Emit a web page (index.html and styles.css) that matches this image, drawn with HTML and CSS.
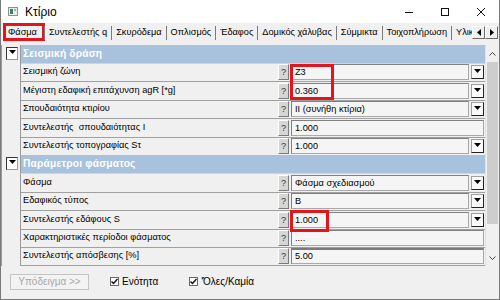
FILE: index.html
```html
<!DOCTYPE html>
<html lang="el">
<head>
    <meta charset="UTF-8">
    <title>Κτίριο</title>
    <link rel="stylesheet" href="styles.css">
</head>
<body>
    <div class="window">
        <div class="titlebar">
            <svg class="app-icon" viewBox="0 0 10 9">
                <rect x="0.5" y="0.5" width="9" height="8" fill="#e8ecea" stroke="#8a9490"/>
                <rect x="2" y="2" width="3" height="5" fill="#3f7f6f"/>
                <rect x="6" y="2" width="2" height="2" fill="#9fb3ad"/>
            </svg>
            <span class="title">Κτίριο</span>
            <div class="controls">
                <span class="ctl"><svg width="10" height="10" viewBox="0 0 10 10"><line x1="1" y1="5.5" x2="9" y2="5.5" stroke="#111" stroke-width="1"/></svg></span>
                <span class="ctl"><svg width="10" height="10" viewBox="0 0 10 10"><rect x="1.5" y="1.5" width="7" height="7" fill="none" stroke="#111" stroke-width="1"/></svg></span>
                <span class="ctl"><svg width="10" height="10" viewBox="0 0 10 10"><path d="M1 1 L9 9 M9 1 L1 9" stroke="#111" stroke-width="1"/></svg></span>
            </div>
        </div>

        <div class="tabs">
            <div class="tab-list">
                <div class="tab active">Φάσμα</div>
                <div class="tab">Συντελεστής q</div>
                <div class="tab">Σκυρόδεμα</div>
                <div class="tab">Οπλισμός</div>
                <div class="tab">Έδαφος</div>
                <div class="tab">Δομικός χάλυβας</div>
                <div class="tab">Σύμμικτα</div>
                <div class="tab">Τοιχοπλήρωση</div>
                <div class="tab">Υλικά</div>
            </div>
            <div class="tab-arrows">
                <span class="arrow"><svg width="4" height="7" viewBox="0 0 4 7"><path d="M4 0 L0 3.5 L4 7 Z" fill="#000"/></svg></span>
                <span class="arrow"><svg width="4" height="7" viewBox="0 0 4 7"><path d="M0 0 L4 3.5 L0 7 Z" fill="#000"/></svg></span>
            </div>
        </div>

        <div class="grid-area">
            <div class="grid">
                <div class="row header">
                    <div class="gutter"><span class="expander"><svg width="7" height="4" viewBox="0 0 7 4"><path d="M0 0 L7 0 L3.5 4 Z" fill="#000"/></svg></span></div>
                    <div class="head-label">Σεισμική δράση</div>
                </div>
                <div class="row">
                    <div class="gutter"></div>
                    <div class="label">Σεισμική ζώνη</div>
                    <div class="help"><span>?</span></div>
                    <div class="value"><span class="box">Z3</span><span class="drop"><svg width="7" height="4" viewBox="0 0 7 4"><path d="M0 0 L7 0 L3.5 4 Z" fill="#000"/></svg></span></div>
                </div>
                <div class="row">
                    <div class="gutter"></div>
                    <div class="label">Μέγιστη εδαφική επιτάχυνση agR [*g]</div>
                    <div class="help"><span>?</span></div>
                    <div class="value"><span class="box">0.360</span><span class="drop"><svg width="7" height="4" viewBox="0 0 7 4"><path d="M0 0 L7 0 L3.5 4 Z" fill="#000"/></svg></span></div>
                </div>
                <div class="row">
                    <div class="gutter"></div>
                    <div class="label">Σπουδαιότητα κτιρίου</div>
                    <div class="help"><span>?</span></div>
                    <div class="value"><span class="box">ΙΙ (συνήθη κτίρια)</span><span class="drop"><svg width="7" height="4" viewBox="0 0 7 4"><path d="M0 0 L7 0 L3.5 4 Z" fill="#000"/></svg></span></div>
                </div>
                <div class="row">
                    <div class="gutter"></div>
                    <div class="label">Συντελεστής &nbsp;σπουδαιότητας Ι</div>
                    <div class="help"><span>?</span></div>
                    <div class="value"><span class="box">1.000</span></div>
                </div>
                <div class="row">
                    <div class="gutter"></div>
                    <div class="label">Συντελεστής τοπογραφίας Sτ</div>
                    <div class="help"><span>?</span></div>
                    <div class="value"><span class="box">1.000</span><span class="drop"><svg width="7" height="4" viewBox="0 0 7 4"><path d="M0 0 L7 0 L3.5 4 Z" fill="#000"/></svg></span></div>
                </div>
                <div class="row header">
                    <div class="gutter"><span class="expander"><svg width="7" height="4" viewBox="0 0 7 4"><path d="M0 0 L7 0 L3.5 4 Z" fill="#000"/></svg></span></div>
                    <div class="head-label">Παράμετροι φάσματος</div>
                </div>
                <div class="row">
                    <div class="gutter"></div>
                    <div class="label">Φάσμα</div>
                    <div class="help"><span>?</span></div>
                    <div class="value"><span class="box">Φάσμα σχεδιασμού</span><span class="drop"><svg width="7" height="4" viewBox="0 0 7 4"><path d="M0 0 L7 0 L3.5 4 Z" fill="#000"/></svg></span></div>
                </div>
                <div class="row">
                    <div class="gutter"></div>
                    <div class="label">Εδαφικός τύπος</div>
                    <div class="help"><span>?</span></div>
                    <div class="value"><span class="box">B</span><span class="drop"><svg width="7" height="4" viewBox="0 0 7 4"><path d="M0 0 L7 0 L3.5 4 Z" fill="#000"/></svg></span></div>
                </div>
                <div class="row">
                    <div class="gutter"></div>
                    <div class="label">Συντελεστής εδάφους S</div>
                    <div class="help"><span>?</span></div>
                    <div class="value"><span class="box">1.000</span><span class="drop"><svg width="7" height="4" viewBox="0 0 7 4"><path d="M0 0 L7 0 L3.5 4 Z" fill="#000"/></svg></span></div>
                </div>
                <div class="row">
                    <div class="gutter"></div>
                    <div class="label">Χαρακτηριστικές περίοδοι φάσματος</div>
                    <div class="help"><span>?</span></div>
                    <div class="value"><span class="box">....</span></div>
                </div>
                <div class="row">
                    <div class="gutter"></div>
                    <div class="label">Συντελεστής απόσβεσης [%]</div>
                    <div class="help"><span>?</span></div>
                    <div class="value"><span class="box editing">5.00</span></div>
                </div>
            </div>
            <div class="vscroll">
                <span class="sb-arrow">
                    <svg width="7" height="4" viewBox="0 0 7 4"><path d="M0.5 3.5 L3.5 0.5 L6.5 3.5" fill="none" stroke="#444"/></svg>
                </span>
                <span class="sb-thumb"></span>
                <span class="sb-arrow bottom">
                    <svg width="7" height="4" viewBox="0 0 7 4"><path d="M0.5 0.5 L3.5 3.5 L6.5 0.5" fill="none" stroke="#444"/></svg>
                </span>
            </div>
            <div class="mark mark-zone"></div>
            <div class="mark mark-soil"></div>
        </div>

        <div class="footer">
            <button class="btn" disabled>Υπόδειγμα &gt;&gt;</button>
            <label class="check first">
                <span class="check-box"><svg width="7" height="7" viewBox="0 0 7 7"><path d="M0.5 3.5 L2.5 5.5 L6.5 1" fill="none" stroke="#111" stroke-width="1.5"/></svg></span>
                Ενότητα
            </label>
            <label class="check">
                <span class="check-box"><svg width="7" height="7" viewBox="0 0 7 7"><path d="M0.5 3.5 L2.5 5.5 L6.5 1" fill="none" stroke="#111" stroke-width="1.5"/></svg></span>
                'Όλες/Καμία
            </label>
        </div>
    </div>
</body>
</html>
```

FILE: styles.css
```css
/* base */
* {
    box-sizing: border-box;
}
body {
    margin: 0;
    font-family: "Liberation Sans", Arial, sans-serif;
    font-size: 9.2px;
    color: #000;
    background: #fff;
}

/* window frame */
.window {
    width: 500px;
    height: 300px;
    background: #f0f0f0;
    border: 1px solid #7a7a7a;
    border-top: none;
    display: flex;
    flex-direction: column;
    overflow: hidden;
}

/* title bar */
.titlebar {
    height: 23px;
    flex: none;
    background: #fff;
    display: flex;
    align-items: center;
    padding-left: 7px;
}
.app-icon {
    width: 10px;
    height: 9px;
    margin-right: 7px;
}
.title {
    font-size: 12px;
}
.controls {
    margin-left: auto;
    display: flex;
    height: 100%;
}
.ctl {
    width: 36px;
    display: flex;
    align-items: center;
    justify-content: center;
}

/* tabs */
.tabs {
    height: 22px;
    flex: none;
    display: flex;
    align-items: flex-start;
    padding-left: 2px;
}
.tab-list {
    flex: 1;
    display: flex;
    overflow: hidden;
}
.tab {
    height: 18px;
    line-height: 19px;
    padding: 0 5px 0 4px;
    white-space: nowrap;
    position: relative;
}
.tab::after {
    content: "";
    position: absolute;
    right: 0;
    top: 3px;
    bottom: 1px;
    width: 1px;
    background: #7a7a7a;
}
.tab.active {
    padding: 0 8px 0 5px;
    outline: 3px solid #e3141b;
    outline-offset: -3px;
}
.tab-arrows {
    display: flex;
    padding-top: 3px;
    margin-right: 1px;
}
.arrow {
    width: 13px;
    height: 13px;
    border: 1px solid #fff;
    border-right-color: #6a6a6a;
    border-bottom-color: #6a6a6a;
    background: #f0f0f0;
    display: flex;
    align-items: center;
    justify-content: center;
}

/* property grid */
.grid-area {
    height: 221px;
    flex: none;
    display: flex;
    position: relative;
}
.grid {
    flex: 1;
    display: flex;
    flex-direction: column;
}
.row {
    height: 18.4px;
    display: grid;
    grid-template-columns: 19px 257px 14px 1fr;
}
.row.header {
    grid-template-columns: 19px 1fr;
}
.gutter {
    background: #f0f0f0;
    border-left: 1px solid #9a9a9a;
    position: relative;
}
.expander {
    position: absolute;
    left: 4px;
    top: 2px;
    width: 12px;
    height: 13px;
    background: #fff;
    border: 1px solid #333;
    border-right-color: #9a9a9a;
    border-bottom-color: #9a9a9a;
    display: flex;
    justify-content: center;
    padding-top: 2px;
}
.head-label {
    background: #a8c1dd;
    color: #fff;
    font-size: 10.2px;
    font-weight: bold;
    letter-spacing: 0.2px;
    padding-left: 2px;
    line-height: 18px;
    border-left: 1px solid #9a9a9a;
    border-bottom: 1px solid #c9d6e5;
}
.label {
    border-left: 1px solid #9a9a9a;
    border-bottom: 1px solid #a0a0a0;
    padding-left: 2px;
    line-height: 17px;
    white-space: nowrap;
    overflow: hidden;
}
.help {
    border-bottom: 1px solid #a0a0a0;
    padding: 1px 2px 1px 1px;
}
.help span {
    display: block;
    height: 100%;
    background: #d6d6d6;
    border: 1px solid #fff;
    border-right-color: #7a7a7a;
    border-bottom-color: #7a7a7a;
    color: #333;
    text-align: center;
    line-height: 14px;
}
.value {
    display: flex;
    align-items: stretch;
    padding: 1px 1px 1px 0;
    border-bottom: 1px solid #a0a0a0;
}
.box {
    flex: 1;
    background: #f5f5f5;
    border: 1px solid #a9a9a9;
    border-top-color: #808080;
    border-left-color: #808080;
    padding-left: 3px;
    line-height: 14px;
}
.box.editing {
    border-top: 2px solid #7a7a7a;
    line-height: 13px;
}
.drop {
    width: 13px;
    margin: 1px 0 1px 2px;
    background: #fafafa;
    border: 1px solid #a0a0a0;
    border-right-color: #222;
    border-bottom-color: #222;
    display: flex;
    justify-content: center;
    padding-top: 3px;
}

/* vertical scrollbar */
.vscroll {
    width: 14px;
    display: flex;
    flex-direction: column;
    align-items: center;
    border-left: 1px solid #e2e2e2;
    background: #f0f0f0;
}
.sb-arrow {
    height: 17px;
    display: flex;
    align-items: center;
    justify-content: center;
}
.sb-arrow.bottom {
    margin-top: auto;
}
.sb-thumb {
    width: 11px;
    height: 162px;
    background: #cdcdcd;
}

/* highlight frames */
.mark {
    position: absolute;
    border: 3px solid #e3141b;
}
.mark-zone {
    left: 289px;
    top: 19px;
    width: 44px;
    height: 36px;
}
.mark-soil {
    left: 289px;
    top: 165px;
    width: 39px;
    height: 22px;
}

/* footer */
.footer {
    flex: 1;
    display: flex;
    align-items: center;
    padding: 0 0 2px 9px;
    font-size: 10px;
}
.btn {
    width: 79px;
    height: 16px;
    padding: 0;
    font-family: inherit;
    font-size: 10px;
    color: #a8a8a8;
    background: #f3f3f3;
    border: 1px solid #c4c4c4;
}
.check {
    display: flex;
    align-items: center;
    gap: 3px;
    margin-left: 31px;
}
.check.first {
    margin-left: 21px;
}
.check-box {
    width: 9px;
    height: 9px;
    border: 1px solid #6a6a6a;
    background: #fff;
    display: flex;
    align-items: center;
    justify-content: center;
}
```
